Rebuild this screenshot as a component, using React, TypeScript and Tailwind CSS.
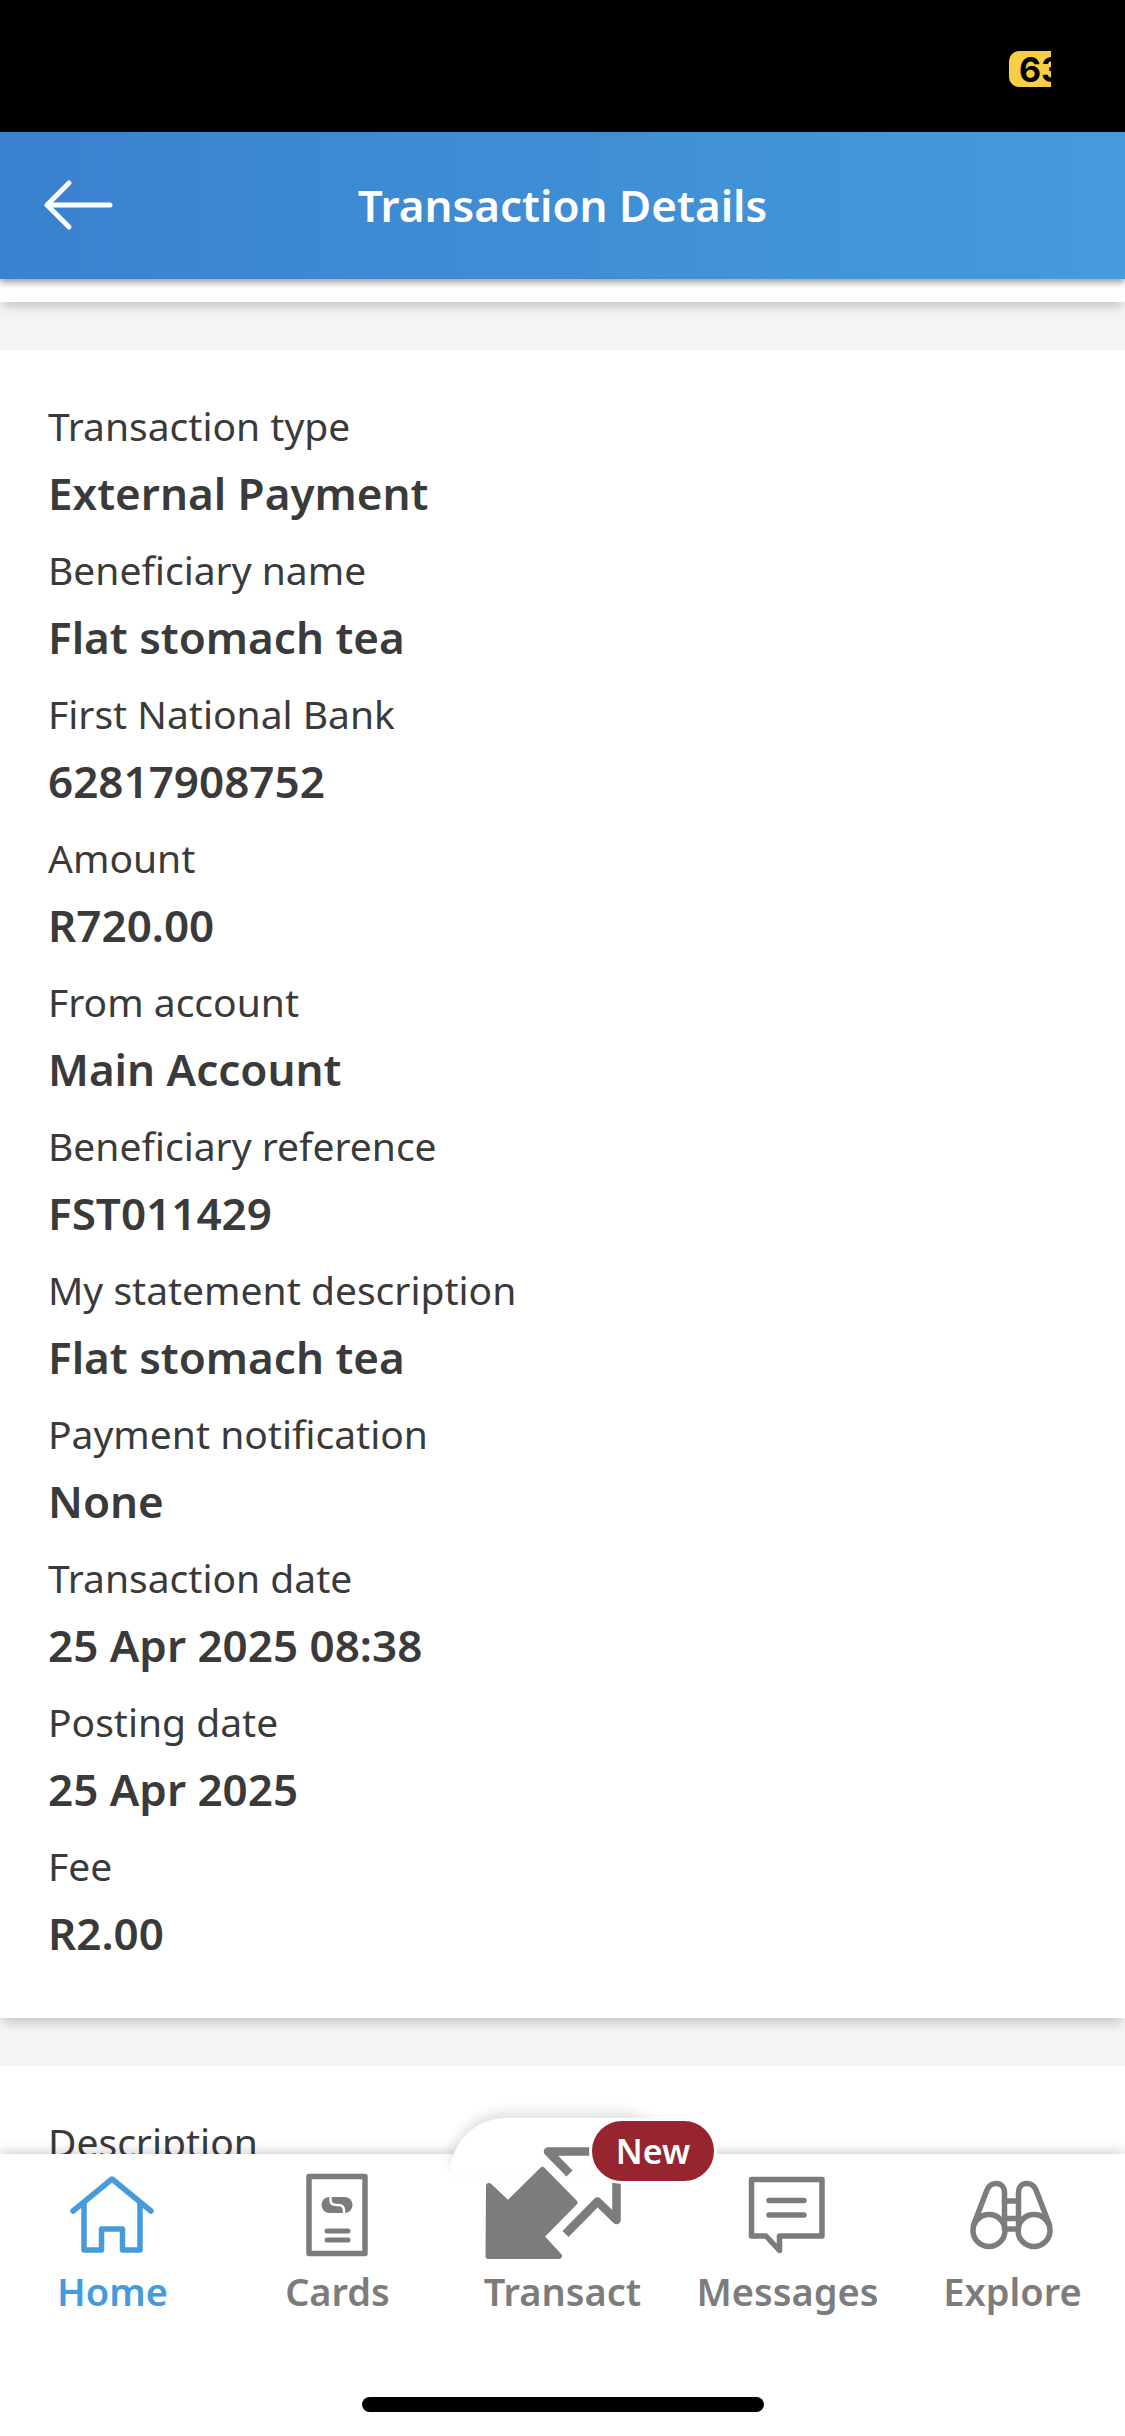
import type { ReactNode } from "react";

type Detail = { label: string; value: string };

const details: Detail[] = [
  { label: "Transaction type", value: "External Payment" },
  { label: "Beneficiary name", value: "Flat stomach tea" },
  { label: "First National Bank", value: "62817908752" },
  { label: "Amount", value: "R720.00" },
  { label: "From account", value: "Main Account" },
  { label: "Beneficiary reference", value: "FST011429" },
  { label: "My statement description", value: "Flat stomach tea" },
  { label: "Payment notification", value: "None" },
  { label: "Transaction date", value: "25 Apr 2025 08:38" },
  { label: "Posting date", value: "25 Apr 2025" },
  { label: "Fee", value: "R2.00" },
];

export default function App() {
  return <div className="flex h-screen flex-col overflow-hidden bg-[#f4f4f4] font-['Noto_Sans',sans-serif] text-[#3a3a3a]">
    <StatusBar />
    <header className="relative z-10 grid h-[147px] shrink-0 grid-cols-[1fr_auto_1fr] items-center bg-linear-to-r from-[#3a81cf] to-[#459bdb] px-10 pb-0.5 shadow-[0_4px_6px_rgba(0,0,0,0.35)]">
      <button type="button" aria-label="Back" className="justify-self-start">
        <svg width="76" height="56" viewBox="0 0 76 56" fill="none" stroke="#fff" strokeWidth="5" strokeLinecap="round" strokeLinejoin="round">
          <path d="M29 6 7 28l22 22M7 28h63" />
        </svg>
      </button>
      <h1 className="text-[44px] font-semibold text-white">Transaction Details</h1>
    </header>
    <main className="min-h-0 flex-1 overflow-hidden">
      <div className="h-[23px] bg-white shadow-[0_8px_10px_-3px_rgba(0,0,0,0.18)]" />
      <section className="mt-12 bg-white px-12 pt-10 pb-11 shadow-[0_8px_10px_-3px_rgba(0,0,0,0.18)]">
        <dl>
          {details.map(detail => <DetailRow key={detail.label} {...detail} />)}
        </dl>
      </section>
      <section className="mt-12 bg-white px-12 pt-10 pb-11">
        <h2 className="text-[39px] leading-[72px]">Description</h2>
      </section>
    </main>
    <TabBar />
  </div>;
}

function StatusBar() {
  return <div className="flex h-33 shrink-0 items-center justify-end bg-black pt-1.5 pr-[74px]">
    <div className="flex h-9 w-[42px] items-center overflow-hidden rounded-l-[10px] bg-[#f7ce46] pl-2.5 font-['Inter',sans-serif] text-[34px] font-bold text-black">63</div>
  </div>;
}

function DetailRow({ label, value }: Detail) {
  return <div className="pb-2.5">
    <dt className="text-[39px] leading-[72px]">{label}</dt>
    <dd className="text-[44px] leading-[62px] font-semibold">{value}</dd>
  </div>;
}

function TabBar() {
  return <nav className="relative z-10 h-[282px] shrink-0 bg-white shadow-[0_-2px_12px_rgba(0,0,0,0.2)]">
    <div className="grid grid-cols-5">
      <Tab label="Home" active><HomeIcon /></Tab>
      <Tab label="Cards"><CardsIcon /></Tab>
      <Tab label="Transact" raised badge="New"><TransactIcon /></Tab>
      <Tab label="Messages"><MessagesIcon /></Tab>
      <Tab label="Explore"><ExploreIcon /></Tab>
    </div>
    <div className="absolute inset-x-0 bottom-6 mx-auto h-[15px] w-[402px] rounded-full bg-black" />
  </nav>;
}

function Tab({ label, active, raised, badge, children }: { label: string; active?: boolean; raised?: boolean; badge?: string; children: ReactNode }) {
  return <a href="#" aria-current={active ? "page" : undefined} className={`relative flex flex-col items-center pt-3 ${active ? "text-[#459bdb]" : "text-[#7c7c7c]"}`}>
    {raised && <span className="absolute inset-x-0 -top-9 h-14 rounded-t-[56px] bg-white shadow-[0_-6px_12px_rgba(0,0,0,0.12)]" />}
    <svg className="relative overflow-visible" width="160" height="96" viewBox="1 0 160 96" fill="none" stroke="currentColor" strokeWidth="5.5" strokeLinecap="round" strokeLinejoin="round">
      {children}
    </svg>
    <span className="relative text-[38px] leading-[58px] font-semibold">{label}</span>
    {badge && <span className="absolute -top-9 left-[139px] z-10 flex h-[66px] w-32 items-center justify-center rounded-full border-3 border-white bg-[#96252f] text-[34px] font-semibold text-white">{badge}</span>}
  </a>;
}

function HomeIcon() {
  return <>
    <path d="m41 45 39-32 39 32" />
    <path d="M52 37v47h17.5V63h21v21H108V37" />
  </>;
}

function CardsIcon() {
  return <>
    <path d="M52 10.5h56v77H52z" />
    <path d="M70 65h21M70 74h21" strokeWidth="5" />
    <rect x="64.5" y="31" width="31" height="16" rx="8" fill="currentColor" stroke="none" />
    <path d="M73.5 30v4q0 5 6 5h2q5 0 5.5 5v4" stroke="#fff" strokeWidth="2.5" strokeLinecap="butt" />
  </>;
}

function TransactIcon() {
  return <>
    <path d="m7 20 19 18L60.5 4l32 32.5-33.5 34L77 90H6.5z" fill="currentColor" strokeWidth="6" />
    <path d="M87.5 7.5 66-14.5h68.5V54l-19-18.5-32 32.5" strokeWidth="8.5" strokeLinecap="butt" />
  </>;
}

function MessagesIcon() {
  return <>
    <path d="M44.5 13.5H115V70H72.5v14.5L59 70H44.5z" />
    <path d="M62 34.5h35M62 49h35" />
  </>;
}

function ExploreIcon() {
  return <>
    <circle cx="57" cy="64.5" r="16" />
    <circle cx="102" cy="64.5" r="16" />
    <path d="M41.5 59 55 24c4-10 17.5-8 17.5 2v36M117.5 59 104 24c-4-10-17.5-8-17.5 2v36" />
    <path d="M72.5 35h14M72.5 52.5h14M72.5 63h14" />
  </>;
}
